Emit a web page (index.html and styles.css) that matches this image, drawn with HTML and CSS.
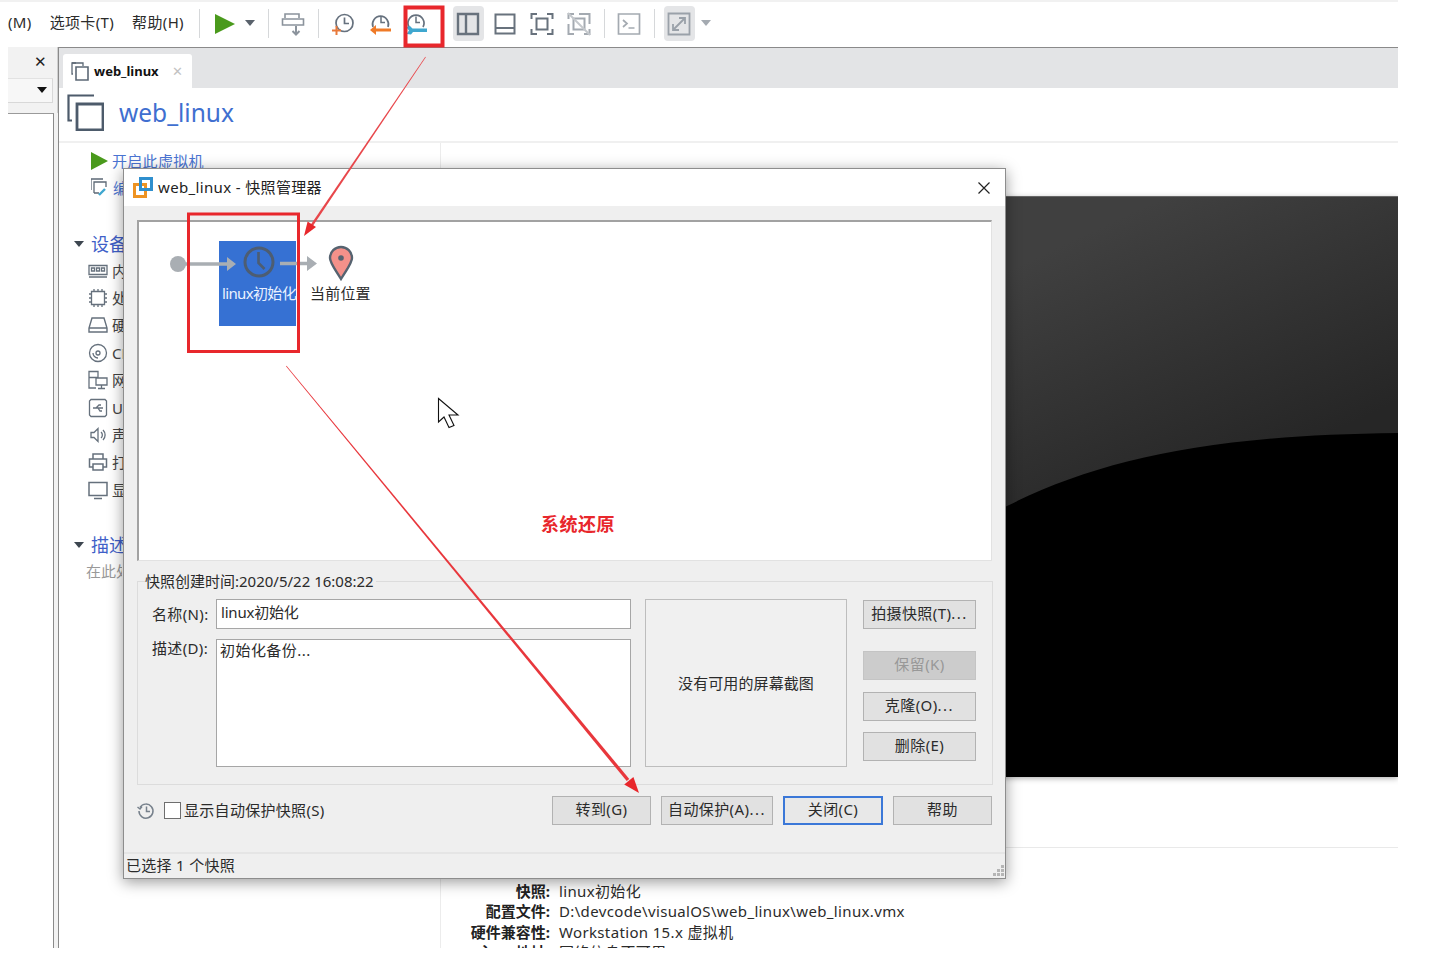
FILE: index.html
```html
<!DOCTYPE html>
<html lang="zh-CN">
<head>
    <meta charset="UTF-8">
    <title>web_linux - VMware Workstation</title>
    <link rel="stylesheet" href="styles.css">
</head>
<body>
<div class="app">
    <div class="toolbar">
        <span class="menu">(M)</span>
        <span class="menu">选项卡(T)</span>
        <span class="menu">帮助(H)</span>
        <i class="sep first"></i>
        <span class="tool"><svg width="22" height="22" viewBox="0 0 22 22"><path d="M1 1 21 11 1 21z" fill="#4a9a1c"/></svg></span>
        <i class="caret"></i>
        <i class="sep"></i>
        <span class="tool"><svg width="24" height="24" viewBox="0 0 24 24" fill="none" stroke="#8b939c" stroke-width="1.6"><path d="M4 6V2h14v4M1.500 7h21v6h-21z"/><path d="M15 14v8M11.500 19l3.500 3.500 3.500-3.500" stroke-width="2"/></svg></span>
        <i class="sep"></i>
        <span class="tool"><svg width="24" height="24" viewBox="0 0 24 24" fill="none"><circle cx="13.500" cy="11" r="8.500" stroke="#66717e" stroke-width="1.700"/><path d="M13.500 5.500V11.500H18" stroke="#66717e" stroke-width="1.700"/><path d="M1 18.500H10M5.500 14V23" stroke="#e8793a" stroke-width="2"/></svg></span>
        <span class="tool"><svg width="24" height="24" viewBox="0 0 24 24" fill="none"><path d="M5 15a8 8 0 1 1 15 0" stroke="#66717e" stroke-width="1.700"/><path d="M13 4.500V10.500H17" stroke="#66717e" stroke-width="1.500"/><path d="M23 18H6" stroke="#ef7a27" stroke-width="3"/><path d="M8 13 2 18l6 5z" fill="#ef7a27"/></svg></span>
        <span class="tool"><svg width="24" height="24" viewBox="0 0 24 24" fill="none"><path d="M4 15a8 8 0 1 1 14 0" stroke="#66717e" stroke-width="1.700"/><path d="M11 4.500V10.500H15" stroke="#66717e" stroke-width="1.500"/><path d="M1 15l4-1 2.500 2.500H22V20H8l-2 2.500-4.500-.5 2.500-3.500z" fill="#3fa7cf"/></svg></span>
        <span class="tool on push"><svg width="24" height="24" viewBox="0 0 24 24" fill="none" stroke="#68727d" stroke-width="2.400"><path d="M2 2h20v20H2zM10 2v20"/></svg></span>
        <span class="tool"><svg width="24" height="24" viewBox="0 0 24 24" fill="none" stroke="#68727d" stroke-width="2"><path d="M2.500 2.500h19v19h-19zM2.500 16h19"/></svg></span>
        <span class="tool"><svg width="24" height="24" viewBox="0 0 24 24" fill="none" stroke="#68727d" stroke-width="2"><path d="M7 2H1.500v5M17 2h5.500v5M7 22H1.500v-5M17 22h5.500v-5M6.500 6.500h11v11h-11z"/></svg></span>
        <span class="tool"><svg width="24" height="24" viewBox="0 0 24 24" fill="none" stroke="#a4aab1" stroke-width="2"><path d="M7 2H1.500v5M12 2h10.500v10M7 22H1.500V12M17 22h5.500v-5M6.500 6.500h11v11h-11z"/><path d="M1 1 23 23" stroke="#c4c8cc"/></svg></span>
        <i class="sep"></i>
        <span class="tool"><svg width="24" height="24" viewBox="0 0 24 24" fill="none" stroke="#a4aab1" stroke-width="1.700"><path d="M1.500 2h21v20h-21z"/><path d="M6 8l4 3.500L6 15M11.500 16h6"/></svg></span>
        <i class="sep"></i>
        <span class="tool on"><svg width="24" height="24" viewBox="0 0 24 24" fill="none" stroke="#9aa1a9" stroke-width="1.800"><path d="M1.500 1.500h21v21h-21z"/><path d="M7 17 17 7M12 6h6v6M6 12v6h6"/></svg></span>
        <i class="caret light"></i>
    </div>

    <div class="workspace">
        <aside class="library">
            <div class="library-head">
                <span class="library-close">✕</span>
                <div class="library-search"><i class="caret dark"></i></div>
            </div>
            <div class="library-list"></div>
        </aside>

        <main class="main">
            <div class="tabs">
                <div class="tab">
                    <svg width="18" height="19" viewBox="0 0 18 19" fill="none" stroke="#5c6875" stroke-width="1.300"><path d="M5 1H1v11h1"/><path d="M1 1h11v3"/><path d="M5 5h12v13H5z" stroke-width="1.600"/></svg>
                    <span class="tab-name">web_linux</span>
                    <span class="tab-close">✕</span>
                </div>
            </div>
            <div class="vm-head">
                <svg width="37" height="37" viewBox="0 0 37 37" fill="none" stroke="#4d5b6b"><path d="M27 1.500H1.500v25H5" stroke-width="2.200"/><path d="M10 10h26v26H10z" stroke-width="2.800"/></svg>
                <h1>web_linux</h1>
            </div>
            <div class="vm-body">
                <div class="vm-left">
                    <div class="cmd"><svg width="17" height="18" viewBox="0 0 17 18"><path d="M0 0 17 9 0 18z" fill="#4a9a1c"/></svg>开启此虚拟机</div>
                    <div class="cmd second"><svg width="19" height="19" viewBox="0 0 19 19" fill="none" stroke="#5c6875" stroke-width="1.300"><path d="M1 12V1h12M4 15V4h12v5M4 15h5"/><path d="M9 17l6-6" stroke="#3fa7cf" stroke-width="2.400"/></svg>编辑虚拟机设置</div>
                    <div class="sec-title"><i class="caret dark"></i>设备</div>
                    <div class="device"><svg width="20" height="20" viewBox="0 0 20 20" fill="none" stroke="#65707c" stroke-width="1.300"><path d="M1 4.500h18v9H1zM1 16h18"/><path d="M3.500 7h3v3h-3zM8.500 7h3v3h-3zM13.500 7h3v3h-3z"/></svg>内存</div>
                    <div class="device"><svg width="20" height="20" viewBox="0 0 20 20" fill="none" stroke="#65707c" stroke-width="1.300"><path d="M3.500 3.500h13v13h-13z"/><path d="M1 6h2M1 10h2M1 14h2M17 6h2M17 10h2M17 14h2M6 1v2M10 1v2M14 1v2M6 17v2M10 17v2M14 17v2"/></svg>处理器</div>
                    <div class="device"><svg width="20" height="20" viewBox="0 0 20 20" fill="none" stroke="#65707c" stroke-width="1.400"><path d="M4 3h12l3 10v4H1v-4zM1 13h18"/></svg>硬盘</div>
                    <div class="device"><svg width="20" height="20" viewBox="0 0 20 20" fill="none" stroke="#65707c" stroke-width="1.300"><circle cx="10" cy="10" r="8.500"/><circle cx="10" cy="10" r="2"/><path d="M5 10a5 5 0 0 0 5 5"/></svg>CD/DVD</div>
                    <div class="device"><svg width="20" height="20" viewBox="0 0 20 20" fill="none" stroke="#65707c" stroke-width="1.300"><path d="M1 1.500h9v6H1zM8 8h11v7H8zM13.500 15v3M10 18.500h7M1 8v10h7" /></svg>网络适配器</div>
                    <div class="device"><svg width="20" height="20" viewBox="0 0 20 20" fill="none" stroke="#65707c" stroke-width="1.300"><path d="M3 1.500h14l1.500 1.500v14L17 18.500H3L1.500 17V3z"/><path d="M5 10h10M8 10l3-3h2M10 10l2 3h2"/></svg>USB 控制器</div>
                    <div class="device"><svg width="20" height="20" viewBox="0 0 20 20" fill="none" stroke="#65707c" stroke-width="1.300"><path d="M3 7.500h3l4-4v13l-4-4H3zM13 7a4 4 0 0 1 0 6M15 5a7 7 0 0 1 0 10"/></svg>声卡</div>
                    <div class="device"><svg width="20" height="20" viewBox="0 0 20 20" fill="none" stroke="#65707c" stroke-width="1.500"><path d="M5 7V2h10v5M5 15H1.500V7h17v8H15M5 12h10v6H5z"/></svg>打印机</div>
                    <div class="device"><svg width="20" height="20" viewBox="0 0 20 20" fill="none" stroke="#65707c" stroke-width="1.500"><path d="M1 2.500h18v13H1zM6 18.500h8"/></svg>显示器</div>
                    <div class="sec-title desc"><i class="caret dark"></i>描述</div>
                    <div class="desc-hint">在此处键入对该虚拟机的描述。</div>
                </div>
                <div class="vm-right">
                    <div class="preview">
                        <svg class="preview-curve" width="928" height="580" viewBox="0 0 928 580" preserveAspectRatio="none"><path d="M0 580V560L536 309C630 262 740 238 928 236V580z" fill="#000"/></svg>
                    </div>
                    <div class="details">
                        <div class="row"><b>状态:</b><span>已关机</span></div>
                        <div class="row"><b>快照:</b><span>linux初始化</span></div>
                        <div class="row"><b>配置文件:</b><span>D:\devcode\visualOS\web_linux\web_linux.vmx</span></div>
                        <div class="row"><b>硬件兼容性:</b><span>Workstation 15.x 虚拟机</span></div>
                        <div class="row"><b>主 IP 地址:</b><span>网络信息不可用</span></div>
                    </div>
                </div>
            </div>
        </main>
    </div>
</div>

<div class="dialog">
    <div class="dlg-title">
        <svg width="20" height="21" viewBox="0 0 20 21" fill="none" stroke-width="3"><path d="M1.500 7.500h11v12h-11z" stroke="#ee9322"/><path d="M7.500 1.500h11v11h-11z" stroke="#2f8fce"/></svg>
        <span class="dlg-name">web_linux - 快照管理器</span>
        <svg class="dlg-close" width="12" height="12" viewBox="0 0 12 12" stroke="#222" stroke-width="1.200"><path d="M.5.500l11 11M11.500.500l-11 11"/></svg>
    </div>

    <div class="tree">
        <div class="node-sel"></div>
        <svg class="tree-lines" width="240" height="70" viewBox="0 0 240 70" fill="none">
            <circle cx="39" cy="42" r="8" fill="#a9aeb3"/>
            <path d="M46 42H90M141 41.500H170" stroke="#a9aeb3" stroke-width="3.400"/>
            <path d="M88 35l9 7-9 7zM168 34l10 7.500-10 7.500z" fill="#a9aeb3"/>
            <circle cx="120" cy="40" r="14" stroke="#4d5d72" stroke-width="3"/>
            <path d="M119.500 30V41l6 6" stroke="#4d5d72" stroke-width="2.600"/>
            <path d="M202 57c-6-10-11-16-11-21a11 11 0 0 1 22 0c0 5-5 11-11 21z" fill="#f4918a" stroke="#566370" stroke-width="2.400"/>
            <circle cx="202" cy="36" r="2.800" fill="#566370"/>
        </svg>
        <span class="node-label sel">linux初始化</span>
        <span class="node-label here">当前位置</span>
    </div>

    <fieldset class="snap-info">
        <legend>快照创建时间:2020/5/22 16:08:22</legend>
        <div class="snap-form">
            <div class="fields">
                <label class="name-label" for="snapName">名称(N):</label>
                <input id="snapName" class="name-input" type="text" value="linux初始化">
                <label class="desc-label" for="snapDesc">描述(D):</label>
                <textarea id="snapDesc" class="desc-input">初始化备份...</textarea>
            </div>
            <div class="shot">没有可用的屏幕截图</div>
            <div class="actions">
                <button class="btn">拍摄快照(T)<span class="dots">...</span></button>
                <button class="btn keep" disabled>保留(K)</button>
                <button class="btn">克隆(O)<span class="dots">...</span></button>
                <button class="btn">删除(E)</button>
            </div>
        </div>
    </fieldset>

    <div class="dlg-foot">
        <svg width="18" height="18" viewBox="0 0 18 18" fill="none" stroke="#77818c" stroke-width="1.500"><path d="M3 5.500A7 7 0 1 1 2 9"/><path d="M.5 5l2.500 2 2-2.500M9.500 4.500V9.500H13"/></svg>
        <label class="auto-check"><span class="box"></span>显示自动保护快照(S)</label>
        <button class="btn foot-btn go">转到(G)</button>
        <button class="btn foot-btn auto">自动保护(A)<span class="dots">...</span></button>
        <button class="btn foot-btn close default">关闭(C)</button>
        <button class="btn foot-btn">帮助</button>
    </div>

    <div class="dlg-status">
        已选择 1 个快照
        <svg class="grip" width="12" height="12" viewBox="0 0 12 12" fill="#b5b5b5"><path d="M9 0h3v3H9zM5 4h3v3H5zM9 4h3v3H9zM1 8h3v3H1zM5 8h3v3H5zM9 8h3v3H9z"/></svg>
    </div>
</div>

<!-- red markup drawn on top of the capture -->
<div class="note-text">系统还原</div>
<svg class="markup" width="1436" height="959" viewBox="0 0 1436 959">
    <rect x="405.500" y="7.500" width="37" height="38" fill="none" stroke="#e8272c" stroke-width="4"/>
    <rect x="188.500" y="214" width="110" height="137.500" fill="none" stroke="#e8272c" stroke-width="3"/>
    <path d="M425.300 56.800 425.800 57.200 311 228.700 309 227.300z" fill="#e8474b"/>
    <path d="M304 236 316 227 307.600 221.600z" fill="#e8272c"/>
    <path d="M286 366.200 286.500 365.800 629.300 778.900 626.700 781.100z" fill="#e8373c"/>
    <path d="M639 793 633.400 776.900 624.200 784.500z" fill="#e8272c"/>
    <path d="M438.500 398.500V422L444 417 449 427.500 454 425.500 449 415H458z" fill="#fff" stroke="#111" stroke-width="1.100"/>
</svg>
</body>
</html>
```

FILE: styles.css
```css
* {
    box-sizing: border-box;
}
body {
    margin: 0;
    width: 1436px;
    height: 959px;
    overflow: hidden;
    position: relative;
    background: #fff;
    font-family: "Noto Sans", "Noto Sans CJK SC", sans-serif;
    font-size: 15px;
    line-height: 20px;
    color: #2b2b2b;
}
.app {
    width: 1398px;
    height: 948px;
    padding-left: 8px;
    overflow: hidden;
    display: flex;
    flex-direction: column;
    border-top: 2px solid #f1f1f1;
}

/* toolbar */
.toolbar {
    height: 45px;
    flex: none;
    display: flex;
    align-items: flex-start;
    padding-top: 4px;
}
.menu {
    line-height: 33px;
    margin-right: 18px;
    letter-spacing: .35px;
}
.sep {
    width: 1px;
    height: 29px;
    margin: 3px 6px 0;
    background: #d6d8da;
}
.sep.first {
    margin-left: -3px;
    margin-right: 7px;
}
.tool {
    width: 37px;
    height: 35px;
    flex: none;
    display: flex;
    align-items: center;
    justify-content: center;
}
.tool.on {
    width: 31px;
    margin: 0 3px;
    background: #e4e5e7;
    border-radius: 4px;
}
.tool.push {
    margin-left: 17px;
}
.caret {
    width: 0;
    height: 0;
    flex: none;
    margin: 14px 1px 0;
    border-left: 5.500px solid transparent;
    border-right: 5.500px solid transparent;
    border-top: 6px solid #59626c;
    margin-right: 7px;
}
.caret.light {
    margin: 14px 0 0 3px;
    border-top-color: #a4aab1;
}
.caret.dark {
    border-top-color: #3d4650;
}

/* left library */
.workspace {
    flex: 1;
    display: flex;
    min-height: 0;
}
.library {
    width: 50px;
    flex: none;
    display: flex;
    flex-direction: column;
    background: #f2f2f2;
}
.library-head {
    height: 66px;
    padding-top: 31px;
    flex: none;
    border-right: 1px solid #cfcfcf;
    position: relative;
}
.library-close {
    position: absolute;
    top: 4px;
    left: 26px;
    font-size: 15px;
    color: #222;
}
.library-search {
    width: 45px;
    height: 25px;
    background: #f7f7f7;
    border-top: 1px solid #e2e2e2;
    border-right: 1px solid #d8d8d8;
    border-bottom: 1px solid #d8d8d8;
    display: flex;
    justify-content: flex-end;
}
.library-search .caret {
    margin: 8px 5px 0 0;
    border-top-color: #111;
}
.library-list {
    flex: 1;
    width: 46px;
    background: #fff;
    border-top: 1px solid #9a9a9a;
    border-right: 1px solid #8a8a8a;
}

/* main area */
.main {
    flex: 1;
    display: flex;
    flex-direction: column;
    min-width: 0;
    border-top: 1px solid #8a8a8a;
    border-left: 1px solid #8a8a8a;
}
.tabs {
    height: 40px;
    flex: none;
    padding: 6px 0 0 4px;
    background: #e3e4e6;
}
.tab {
    width: 129px;
    height: 34px;
    display: flex;
    align-items: center;
    padding-left: 8px;
    background: #fff;
    border-radius: 3px 3px 0 0;
}
.tab-name {
    margin-left: 5px;
    font-size: 13px;
    font-weight: 700;
    color: #111;
}
.tab-close {
    margin-left: 13px;
    font-size: 13px;
    color: #c2c2c2;
}
.vm-head {
    height: 55px;
    flex: none;
    display: flex;
    align-items: center;
    padding: 0 0 4px 8px;
    border-bottom: 2px solid #f0f0f0;
}
.vm-head h1 {
    margin: 0 0 0 15px;
    font-size: 24.500px;
    line-height: 36px;
    font-weight: 400;
    color: #3f6fd0;
}
.vm-body {
    flex: 1;
    display: flex;
    min-height: 0;
}
.vm-left {
    width: 382px;
    flex: none;
    padding: 4px 0 0 29px;
    border-right: 1px solid #ececec;
    white-space: nowrap;
}
.cmd {
    height: 27px;
    display: flex;
    align-items: center;
    gap: 4px;
    margin-left: 3px;
    color: #4a74d2;
    letter-spacing: .3px;
}
.cmd.second {
    width: 33px;
    overflow: hidden;
}
.cmd.second svg {
    margin-left: -1px;
    flex: none;
}
.sec-title {
    height: 27px;
    margin: 29px 0 0 -14px;
    display: flex;
    align-items: center;
    font-size: 18px;
    color: #3f5fc8;
}
.sec-title .caret {
    margin: 0 7px 0 0;
}
.sec-title.desc {
    margin-top: 28px;
}
.device {
    height: 27.400px;
    display: flex;
    align-items: center;
    gap: 4px;
    color: #444;
}
.desc-hint {
    width: 36px;
    overflow: hidden;
    margin: 2px 0 0 -2px;
    color: #999;
}
.vm-right {
    flex: 1;
    min-width: 0;
    padding: 53px 0 0 30px;
}
.preview {
    height: 580px;
    position: relative;
    background: linear-gradient(155deg, #404040 32%, #262626 63%);
    border-top: 1px solid #666;
    box-shadow: 0 2px 6px rgba(0, 0, 0, .35);
}
.preview-curve {
    display: block;
}
.details {
    margin: 71px 0 0 -30px;
    padding-top: 12px;
    border-top: 1px solid #e9e9e9;
}
.row {
    display: flex;
    height: 20.500px;
    white-space: nowrap;
}
.row b {
    width: 109px;
    text-align: right;
    margin-right: 9px;
    color: #222;
}
.row span {
    letter-spacing: .35px;
}

/* snapshot manager window */
.dialog {
    position: absolute;
    left: 123px;
    top: 168px;
    width: 883px;
    height: 711px;
    display: flex;
    flex-direction: column;
    background: #efefef;
    border: 1px solid #8d8d8d;
    box-shadow: 0 3px 14px rgba(0, 0, 0, .4);
}
.dlg-title {
    height: 37px;
    flex: none;
    display: flex;
    align-items: center;
    padding-left: 9px;
    background: #fff;
}
.dlg-name {
    margin: 0 0 2px 5px;
    color: #222;
    letter-spacing: .35px;
}
.dlg-close {
    margin-left: auto;
    margin-right: 15px;
}
.tree {
    width: 855px;
    height: 341px;
    flex: none;
    margin: 14px 0 0 13px;
    position: relative;
    background: #fff;
    border-top: 2px solid #a2a2a2;
    border-left: 2px solid #a2a2a2;
    border-right: 1px solid #e2e2e2;
    border-bottom: 1px solid #e2e2e2;
}
.node-sel {
    position: absolute;
    left: 80px;
    top: 19px;
    width: 77px;
    height: 85px;
    background: #3671d3;
}
.tree-lines {
    position: absolute;
    left: 0;
    top: 0;
}
.node-label {
    position: absolute;
    top: 61px;
    white-space: nowrap;
}
.node-label.sel {
    left: 83px;
    color: #eaf1ff;
    letter-spacing: -.65px;
}
.node-label.here {
    left: 171px;
    letter-spacing: .2px;
}
.snap-info {
    width: 856px;
    height: 214px;
    flex: none;
    margin: 10px 0 0 13px;
    padding: 8px 16px 0 14px;
    min-width: 0;
    border: 1px solid #dcdcdc;
}
.snap-info legend {
    padding: 0 2px 0 0;
    margin-left: -7px;
    line-height: 20px;
}
.snap-form {
    display: flex;
}
.fields {
    width: 479px;
    flex: none;
    display: grid;
    grid-template-columns: 64px 415px;
    grid-template-rows: 30px 128px;
    row-gap: 10px;
}
.name-label {
    line-height: 30px;
    letter-spacing: .35px;
}
.desc-label {
    line-height: 18px;
    letter-spacing: .35px;
}
.name-input, .desc-input {
    display: block;
    margin: 0;
    padding: 0 3px;
    width: 415px;
    border: 1px solid #a6a6a6;
    background: #fff;
    font: inherit;
    color: #2b2b2b;
    outline: none;
    resize: none;
    overflow: hidden;
    border-radius: 0;
}
.name-input {
    height: 30px;
    padding: 0 0 6px 4px;
    letter-spacing: -.2px;
}
.desc-input {
    height: 128px;
    padding-top: 0;
    letter-spacing: .45px;
}
.shot {
    width: 202px;
    height: 168px;
    margin-left: 14px;
    padding-bottom: 1px;
    display: flex;
    align-items: center;
    justify-content: center;
    background: #f0f0f0;
    border: 1px solid #bdbdbd;
    letter-spacing: .1px;
}
.actions {
    width: 113px;
    margin-left: 16px;
    padding-top: 1px;
    display: flex;
    flex-direction: column;
    gap: 11.500px;
}
.btn {
    height: 29px;
    padding: 0 0 3px;
    font: inherit;
    letter-spacing: .4px;
    color: #2b2b2b;
    background: #e1e1e1;
    border: 1px solid #b2b2b2;
    border-radius: 0;
}
.dots {
    letter-spacing: 1.500px;
}
.actions .btn:first-child {
    margin-bottom: 10.500px;
}
.btn.keep {
    background: #cccccc;
    border-color: #c4c4c4;
    color: #989898;
}
.dlg-foot {
    height: 29px;
    flex: none;
    margin-top: 11px;
    padding: 0 13px;
    display: flex;
    align-items: center;
}
.auto-check {
    display: flex;
    align-items: center;
    margin-left: 9px;
    padding-bottom: 1px;
    letter-spacing: .3px;
}
.box {
    width: 17px;
    height: 17px;
    margin: 1px 3px 0 0;
    background: #fff;
    border: 1px solid #6e6e6e;
}
.foot-btn {
    width: 99px;
    flex: none;
    margin-left: 10px;
}
.foot-btn.go {
    margin-left: auto;
}
.foot-btn.auto {
    width: 112px;
}
.foot-btn.close {
    width: 100px;
}
.foot-btn.default {
    background: #e8e8e8;
    border: 2px solid #3b78d8;
}
.dlg-status {
    margin-top: auto;
    height: 26px;
    flex: none;
    position: relative;
    padding: 1px 0 0 2px;
    border-top: 2px solid #e5e5e5;
    letter-spacing: .3px;
}
.grip {
    position: absolute;
    right: 1px;
    bottom: 1px;
}

/* markup */
.markup {
    position: absolute;
    left: 0;
    top: 0;
    pointer-events: none;
}
.note-text {
    position: absolute;
    left: 541px;
    top: 513px;
    z-index: 2;
    font-size: 18px;
    line-height: 22px;
    font-weight: 700;
    letter-spacing: .5px;
    color: #e8272c;
}
```
